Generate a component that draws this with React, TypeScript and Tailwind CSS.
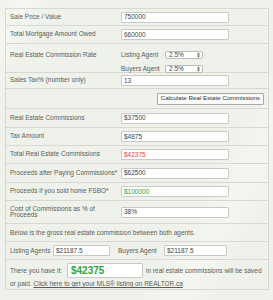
import React from "react";

function Field({ value, w = "w-[108px]", color = "text-[#444]" }: { value: string; w?: string; color?: string }) {
  return (
    <div className={`${w} h-[11px] flex items-center border border-[#c8cac6] bg-white rounded-[1px] pl-[2px] ${color}`}>
      {value}
    </div>
  );
}

function Select({ value }: { value: string }) {
  return (
    <div className="w-[38px] h-[8px] flex items-center justify-between border border-[#b9bbb7] bg-white rounded-[2px] pl-[3px] pr-[2px] text-[#444]">
      <span>{value}</span>
      <svg width="3" height="6" viewBox="0 0 3 6" className="text-[#555]">
        <path d="M0 2.4 L1.5 0.6 L3 2.4Z M0 3.6 L1.5 5.4 L3 3.6Z" fill="currentColor" />
      </svg>
    </div>
  );
}

function Row({ label, h, children }: { label: React.ReactNode; h: string; children?: React.ReactNode }) {
  return (
    <div className={`flex items-center ${h} border-b border-[#d6d9d2]`}>
      <div className="w-[115px] pl-[4px] leading-[6.5px]">{label}</div>
      {children}
    </div>
  );
}

export default function App() {
  const results = [
    { label: "Real Estate Commissions", value: "$37500", h: "h-[19px]" },
    { label: "Tax Amount", value: "$4875", h: "h-[18px]" },
    { label: "Total Real Estate Commissions", value: "$42375", h: "h-[18px]", color: "text-[#ef3b36]" },
    { label: "Proceeds after Paying Commissions*", value: "$62500", h: "h-[19px]" },
    { label: "Proceeds if you sold home FSBO*", value: "$100000", h: "h-[18px]", color: "text-[#2f9e2f]" },
  ];

  return (
    <div className="w-[273px] min-h-[300px] pt-[8px] pl-[5px] pr-[4px] bg-[#eff2eb] bg-[linear-gradient(120deg,#eff2eb_0%,#f5f7f1_6%,#eff2eb_12%,#eff2eb_70%,#f4f6f0_78%,#eff2eb_86%)] font-['Liberation_Sans',Arial,sans-serif] text-[6.5px] text-[#5a5c58]">
      <div className="border-t border-x border-[#d6d9d2]">
        <Row label="Sale Price / Value" h="h-[17px]">
          <Field value="750000" />
        </Row>
        <Row label="Total Mortgage Amount Owed" h="h-[18px]">
          <Field value="660000" />
        </Row>

        {/* commission rate */}
        <div className="flex items-start h-[29px] pt-[6px] border-b border-[#d6d9d2]">
          <div className="w-[115px] pl-[4px]">Real Estate Commission Rate</div>
          <div className="flex flex-col gap-[4px]">
            <div className="flex items-center">
              <span className="w-[44px]">Listing Agent</span>
              <Select value="2.5%" />
            </div>
            <div className="flex items-center">
              <span className="w-[44px]">Buyers Agent</span>
              <Select value="2.5%" />
            </div>
          </div>
        </div>

        <Row label="Sales Tax% (number only)" h="h-[16px]">
          <Field value="13" />
        </Row>

        <div className="flex items-center justify-end h-[20px] pr-[4px] border-b border-[#d6d9d2]">
          <button className="h-[12px] px-[3px] border border-[#a9aba7] bg-[#fafafa] rounded-[1px] text-[6.25px] leading-none text-[#333]">
            Calculate Real Estate Commissions
          </button>
        </div>

        {results.map((r) => (
          <Row key={r.label} label={r.label} h={r.h}>
            <Field value={r.value} color={r.color} />
          </Row>
        ))}

        <Row label={<>Cost of Commissions as % of<br />Proceeds</>} h="h-[23px]">
          <Field value="38%" />
        </Row>

        <div className="flex items-center h-[18px] pl-[4px] border-b border-[#d6d9d2]">
          Below is the gross real estate commission between both agents.
        </div>

        <div className="flex items-center h-[18px] pl-[4px] border-b border-[#d6d9d2]">
          <span className="w-[43px]">Listing Agents</span>
          <Field value="$21187.5" w="w-[57px]" />
          <span className="w-[46px] ml-[8px]">Buyers Agent</span>
          <Field value="$21187.5" w="w-[63px]" />
        </div>

        <div className="flex flex-col h-[30px] pt-[3px] pl-[4px] border-b border-[#d6d9d2]">
          <div className="flex items-center">
            <span className="w-[57px]">There you have it:</span>
            <div className="w-[76px] h-[15px] flex items-center border border-[#c8cac6] bg-white rounded-[1px] pl-[3px] text-[10px] font-bold text-[#34a334]">
              $42375
            </div>
            <span className="ml-[3px]">in real estate commissions will be saved</span>
          </div>
          <div className="mt-[1px]">
            or paid. <span className="underline">Click here to get your MLS® listing on REALTOR.ca</span>
          </div>
        </div>
      </div>
    </div>
  );
}
